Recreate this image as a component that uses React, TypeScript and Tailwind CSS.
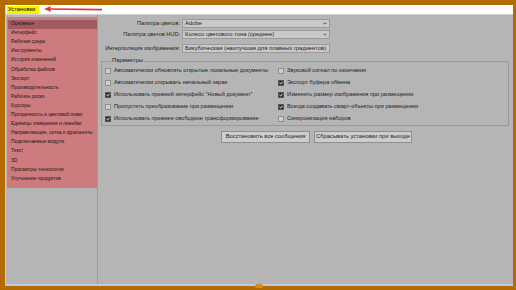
import React from "react";

const leftItems = [
  "Основные",
  "Интерфейс",
  "Рабочая среда",
  "Инструменты",
  "История изменений",
  "Обработка файлов",
  "Экспорт",
  "Производительность",
  "Рабочие диски",
  "Курсоры",
  "Прозрачность и цветовой охват",
  "Единицы измерения и линейки",
  "Направляющие, сетка и фрагменты",
  "Подключаемые модули",
  "Текст",
  "3D",
  "Просмотры технологии",
  "Улучшение продуктов",
];

const leftChecks: [string, boolean][] = [
  ["Автоматически обновлять открытые локальные документы", false],
  ["Автоматически открывать начальный экран", false],
  ["Использовать прежний интерфейс \"Новый документ\"", true],
  ["Пропустить преобразование при размещении", false],
  ["Использовать прежнее свободное трансформирование", true],
];

const rightChecks: [string, boolean][] = [
  ["Звуковой сигнал по окончании", false],
  ["Экспорт буфера обмена", true],
  ["Изменить размер изображения при размещении", true],
  ["Всегда создавать смарт-объекты при размещении", true],
  ["Синхронизация наборов", false],
];

function Check({ label, checked }: { label: string; checked: boolean }) {
  return (
    <div className="flex items-center h-[12px] gap-[3px]">
      {checked ? (
        <div className="w-[6px] h-[6px] bg-[#2e2e2e] border border-[#555] flex items-center justify-center">
          <svg width="4" height="4" viewBox="0 0 4 4">
            <path d="M0.5 2 L1.6 3 L3.5 0.8" stroke="#fff" strokeWidth="0.9" fill="none" />
          </svg>
        </div>
      ) : (
        <div className="w-[6px] h-[6px] bg-[#cfcfcf] border border-[#8e8e8e]" />
      )}
      <span className="text-[5.6px] leading-none text-[#1e1e1e] whitespace-nowrap">{label}</span>
    </div>
  );
}

function SelectRow({ label, value }: { label: string; value: string }) {
  return (
    <div className="flex items-center h-[9px]">
      <div className="w-[84px] text-right pr-[2px] text-[5.6px] leading-none text-[#1e1e1e] whitespace-nowrap">{label}</div>
      <div className="w-[148px] h-[9px] bg-[#c9c9c9] border border-[#9a9a9a] flex items-center justify-between px-[2px]">
        <span className="text-[5.8px] leading-none text-[#1e1e1e] whitespace-nowrap">{value}</span>
        <svg width="4" height="3" viewBox="0 0 4 3">
          <path d="M0.5 0.7 L2 2.2 L3.5 0.7" stroke="#333" strokeWidth="0.8" fill="none" />
        </svg>
      </div>
    </div>
  );
}

export default function App() {
  return (
    <div
      className="w-[516px] h-[290px] bg-[#b46c02] pt-[5px] pl-[5px] pr-[3px] pb-[4px] overflow-hidden"
      style={{ fontFamily: '"Liberation Sans", Arial, sans-serif' }}
    >
      <div className="w-full h-full flex flex-col border-l border-b-2 border-[#bccbe4] relative">
        {/* title bar */}
        <div className="h-[10px] bg-white flex items-center border-b border-[#d0d0d0]">
          <div className="ml-[1px] h-[8px] w-[32px] bg-[#f6f200] flex items-center pl-[1px]">
            <span className="text-[5.8px] leading-none text-black whitespace-nowrap">Установки</span>
          </div>
          <svg className="ml-[5px]" width="60" height="8" viewBox="0 0 60 8">
            <line x1="4" y1="3" x2="58" y2="3.6" stroke="#e5323a" strokeWidth="1.6" />
            <path d="M0 3 L7 0 L6 3 L7 6 Z" fill="#e5323a" />
          </svg>
        </div>
        {/* body */}
        <div className="flex-1 flex bg-[#b5b5b5]">
          {/* left column */}
          <div className="w-[92px] border-r border-[#9c9c9c] pt-[2px] pl-[1px]">
            <div className="h-[171px] bg-[#cd7b7e] pt-[3px]">
              {leftItems.map((it, i) => (
                <div
                  key={it}
                  className={
                    "h-[9.1px] flex items-center pl-[3px] ml-[1px] text-[4.9px] leading-none text-[#1f1414] whitespace-nowrap " +
                    (i === 0 ? "bg-[#9f5b5e]" : "")
                  }
                >
                  {it}
                </div>
              ))}
            </div>
          </div>
          {/* right area */}
          <div className="flex-1 relative">
            <div className="pt-[4px] flex flex-col">
              <div>
                <SelectRow label="Палитра цветов:" value="Adobe" />
              </div>
              <div className="mt-[2px]">
                <SelectRow label="Палитра цветов HUD:" value="Колесо цветового тона (среднее)" />
              </div>
              <div className="mt-[5px]">
                <SelectRow label="Интерполяция изображения:" value="Бикубическая (наилучшая для плавных градиентов)" />
              </div>
            </div>
            {/* frame */}
            <div className="mt-[8px] ml-[3px] mr-[4px] h-[65px] border border-[#9a9a9a] relative">
              <div className="absolute -top-[4px] left-[9px] bg-[#b5b5b5] px-[1px] text-[5.8px] leading-none text-[#1e1e1e]">
                Параметры
              </div>
              <div className="flex pt-[3px] pl-[3px]">
                <div className="w-[173px] flex flex-col">
                  {leftChecks.map(([l, c]) => (
                    <Check key={l} label={l} checked={c} />
                  ))}
                </div>
                <div className="flex flex-col">
                  {rightChecks.map(([l, c]) => (
                    <Check key={l} label={l} checked={c} />
                  ))}
                </div>
              </div>
            </div>
            <div className="flex mt-[5px] ml-[123px] gap-[4px]">
              <div className="w-[89px] h-[12px] bg-[#cdcdcd] border border-[#8e8e8e] flex items-center justify-center text-[5.8px] leading-none text-[#1e1e1e] whitespace-nowrap">
                Восстановить все сообщения
              </div>
              <div className="w-[98px] h-[12px] bg-[#cdcdcd] border border-[#8e8e8e] flex items-center justify-center text-[5.8px] leading-none text-[#1e1e1e] whitespace-nowrap">
                Сбрасывать установки при выходе
              </div>
            </div>
            {/* faint artifact line */}
            <div className="absolute left-[159px] top-[124px] bottom-0 w-px bg-[#c3b9a2]" />
          </div>
        </div>
        <div className="absolute left-[249px] bottom-[-4px] w-[8px] h-[4px] bg-[#d88a1a] rounded-sm" />
      </div>
    </div>
  );
}
